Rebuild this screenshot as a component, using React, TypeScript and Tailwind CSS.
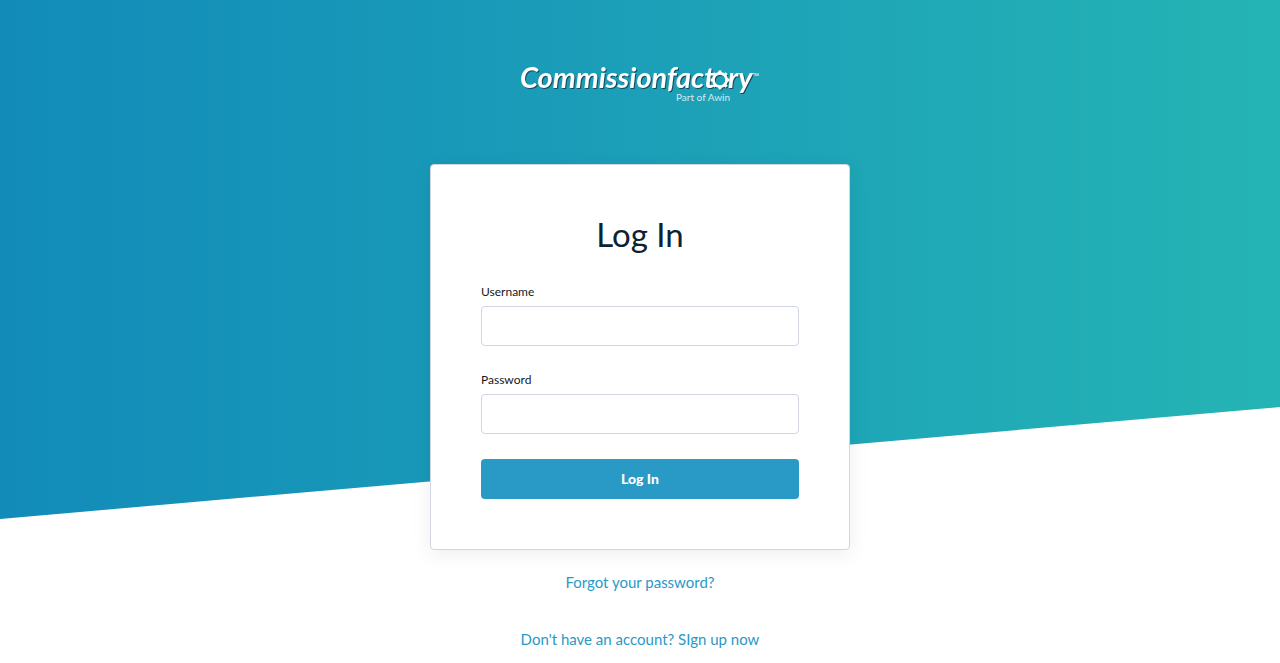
function Gear() {
  const teeth = [0, 45, 90, 135, 180, 225, 270, 315];
  return (
    <g transform="translate(200 24)">
      <circle r="6.6" fill="none" stroke="currentColor" strokeWidth="2.8" />
      {teeth.map((angle) => (
        <rect key={angle} x="-1.5" y="-9.5" width="3" height="2.5" fill="currentColor" transform={`rotate(${angle})`} />
      ))}
    </g>
  );
}

function Logo() {
  return (
    <svg width="240" height="48" viewBox="0 0 240 48" role="img" aria-label="Commission Factory, Part of Awin" className="font-['Lato',sans-serif]">
      <g className="text-white drop-shadow-[1px_1px_0_#174b5b]">
        <text x="0" y="32" fontSize="29" fontWeight="700" fontStyle="italic" fill="currentColor">
          Commissionfact
        </text>
        <Gear />
        <text x="208" y="32" fontSize="29" fontWeight="700" fontStyle="italic" fill="currentColor">
          ry
        </text>
      </g>
      <text x="232" y="22" fontSize="7" fontFamily="Liberation Sans, sans-serif" fill="#ffffff">™</text>
      <text x="156" y="45" fontSize="10" fill="#d3edf1">Part of Awin</text>
    </svg>
  );
}

function Field({ id, label, type }: { id: string; label: string; type: string }) {
  return (
    <div className="flex flex-col">
      <label htmlFor={id} className="mb-1 text-xs leading-5 text-[#16181d]">
        {label}
      </label>
      <input id={id} name={id} type={type} className="h-10 w-full rounded border border-[#d1d5e4] bg-white px-3 text-base outline-none focus:border-[#2999c6]" />
    </div>
  );
}

export default function App() {
  return (
    <div className="relative min-h-screen overflow-hidden bg-white font-['Lato',sans-serif]">
      <div className="absolute inset-x-0 top-0 h-[519px] origin-top-left -skew-y-5 bg-linear-to-r from-[#128bb9] via-[#1c9fb8] to-[#25b4b4]" />
      <main className="relative flex flex-col items-center pt-14">
        <Logo />
        <form className="mt-15 w-full max-w-[420px] rounded border border-[#d1d5e4] bg-white p-[50px] shadow-[0_4px_20px_rgba(0,0,0,0.07)]" onSubmit={(e) => e.preventDefault()}>
          <h1 className="mb-[29px] text-center text-[33px] leading-[38px] text-[#0b2430]">Log In</h1>
          <div className="mb-[25px] flex flex-col gap-6">
            <Field id="username" label="Username" type="text" />
            <Field id="password" label="Password" type="password" />
          </div>
          <button type="submit" className="block h-10 w-full rounded bg-[#2999c6] text-sm font-black text-white">
            Log In
          </button>
        </form>
        <div className="mt-5 flex flex-col items-center gap-[33px] pb-2 text-[15px] leading-6 text-[#2999c6]">
          <a href="#forgot">Forgot your password?</a>
          <a href="#signup">Don't have an account? SIgn up now</a>
        </div>
      </main>
    </div>
  );
}
